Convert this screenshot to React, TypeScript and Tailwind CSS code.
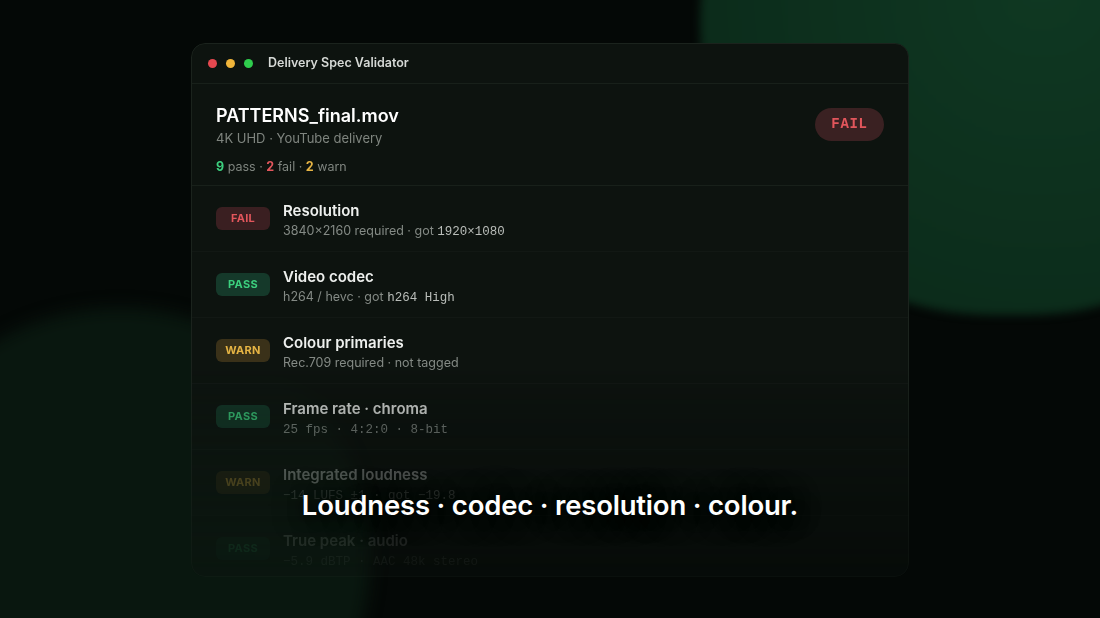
import React from 'react';

type Status = 'PASS' | 'FAIL' | 'WARN';

type Check = {
  status: Status;
  title: string;
  detail: React.ReactNode;
  fade: string;
};

const BADGE: Record<Status, string> = {
  PASS: 'bg-[#15392a] text-[#3ccf7e]',
  FAIL: 'bg-[#3a1f21] text-[#e2565c]',
  WARN: 'bg-[#3a3119] text-[#e6b444]',
};

const mono = "font-['Liberation_Mono',monospace]";

const CHECKS: Check[] = [
  {
    status: 'FAIL',
    title: 'Resolution',
    detail: (
      <>
        3840×2160 required · got <span className={`${mono} text-[#b9bdb9]`}>1920×1080</span>
      </>
    ),
    fade: '',
  },
  {
    status: 'PASS',
    title: 'Video codec',
    detail: (
      <>
        h264 / hevc · got <span className={`${mono} text-[#b9bdb9]`}>h264 High</span>
      </>
    ),
    fade: '',
  },
  {
    status: 'WARN',
    title: 'Colour primaries',
    detail: <>Rec.709 required · not tagged</>,
    fade: '',
  },
  {
    status: 'PASS',
    title: 'Frame rate · chroma',
    detail: <span className={mono}>25 fps · 4:2:0 · 8-bit</span>,
    fade: 'opacity-85',
  },
  {
    status: 'WARN',
    title: 'Integrated loudness',
    detail: <span className={mono}>−14 LUFS ±1 · got −19.8</span>,
    fade: 'opacity-45',
  },
  {
    status: 'PASS',
    title: 'True peak · audio',
    detail: <span className={mono}>−5.9 dBTP · AAC 48k stereo</span>,
    fade: 'opacity-25',
  },
];

function CheckRow({ check }: { check: Check }) {
  return (
    <div className={`h-[66px] shrink-0 flex items-center gap-[13px] px-6 border-b border-[#121814] ${check.fade}`}>
      <div
        className={`w-[54px] h-[23px] rounded-md flex items-center justify-center text-[11px] font-bold tracking-wide ${BADGE[check.status]}`}
      >
        {check.status}
      </div>
      <div className="flex flex-col pt-[5px]">
        <p className="text-[15px] font-semibold text-[#eef0ee] leading-5">{check.title}</p>
        <p className="text-[12.5px] text-[#848a85] leading-5">{check.detail}</p>
      </div>
    </div>
  );
}

export default function App() {
  return (
    <div className="relative w-[1100px] h-[618px] overflow-hidden bg-[#040806] font-['Inter',sans-serif]">
      {/* background glow */}
      <div className="absolute left-[700px] top-[-270px] w-[620px] h-[585px] rounded-full bg-[radial-gradient(circle_at_55%_45%,#0f3822_0%,#0c2c1b_70%,#0a2517_100%)] blur-[4px]" />
      <div className="absolute left-[-130px] top-[308px] w-[500px] h-[500px] rounded-full bg-[#09170f] blur-[8px]" />

      <div className="relative flex justify-center pt-[43px]">
        <div className="w-[718px] h-[534px] rounded-[14px] bg-[#0d130f] border border-[#1b231d] shadow-[0_30px_80px_rgba(0,0,0,0.6)] overflow-hidden flex flex-col [mask-image:linear-gradient(to_bottom,black_60%,rgba(0,0,0,0.3)_100%)]">
          {/* title bar */}
          <div className="h-10 shrink-0 flex items-center gap-[9px] px-4 border-b border-[#18201a]">
            <span className="w-[9px] h-[9px] rounded-full bg-[#e5484f]" />
            <span className="w-[9px] h-[9px] rounded-full bg-[#f0b53a]" />
            <span className="w-[9px] h-[9px] rounded-full bg-[#2fcd4d]" />
            <span className="ml-[6px] text-[12.5px] font-semibold text-[#d6d9d6]">Delivery Spec Validator</span>
          </div>

          {/* file header */}
          <div className="shrink-0 flex items-start justify-between px-6 pt-[20px] pb-[8px] border-b border-[#18201a]">
            <div>
              <h1 className="text-[18px] font-semibold text-white leading-6">PATTERNS_final.mov</h1>
              <p className="text-[13px] text-[#7f857f] leading-5">4K UHD · YouTube delivery</p>
              <p className="text-[12.5px] text-[#7f857f] mt-[9px] leading-5">
                <span className="font-bold text-[#3ccf7e]">9</span> pass · <span className="font-bold text-[#e2565c]">2</span> fail ·{' '}
                <span className="font-bold text-[#e6b444]">2</span> warn
              </p>
            </div>
            <div className={`mt-[4px] w-[69px] h-[33px] rounded-full bg-[#3a2122] flex items-center justify-center text-[14px] font-bold tracking-wider text-[#e2565c] ${mono}`}>
              FAIL
            </div>
          </div>

          {CHECKS.map((c) => (
            <CheckRow key={c.title} check={c} />
          ))}
        </div>
      </div>

      {/* caption */}
      <div className="absolute left-0 right-0 top-[485px] flex justify-center">
        <p className="text-[27.5px] font-semibold text-white tracking-[-0.2px] [text-shadow:0_2px_14px_rgba(0,0,0,0.95),0_0_30px_rgba(0,0,0,0.8)]">
          Loudness · codec · resolution · colour.
        </p>
      </div>
    </div>
  );
}
